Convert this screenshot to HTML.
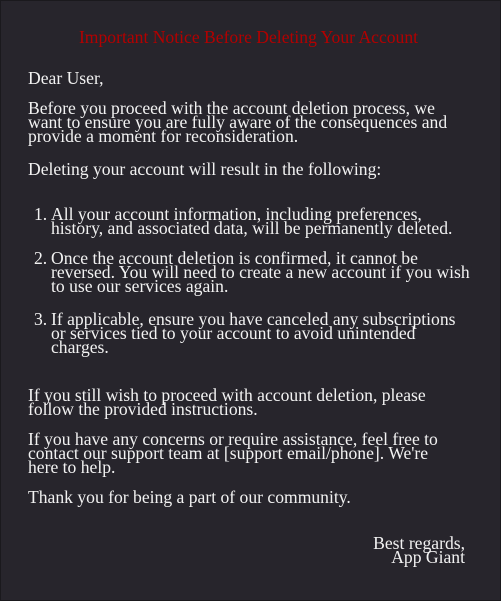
<!DOCTYPE html>
<html><head><style>
html,body{margin:0;padding:0;}
body{width:501px;height:601px;background:#27252c;overflow:hidden;position:relative;box-sizing:border-box;border:1px solid #1a191d;font-family:"Liberation Serif",serif;font-size:17.6px;line-height:14px;color:#f2f2f2;}
.b{position:absolute;left:27px;white-space:nowrap;}
.t{position:absolute;left:-3px;width:501px;text-align:center;top:29px;color:#b30000;}
.n{position:absolute;left:33px;}
.l{position:absolute;left:50px;white-space:nowrap;}
.r{position:absolute;right:35px;text-align:right;white-space:nowrap;}
</style></head><body>
<div class="t">Important Notice Before Deleting Your Account</div>
<div class="b" style="top:70px">Dear User,</div>
<div class="b" style="top:100px">Before you proceed with the account deletion process, we<br>want to ensure you are fully aware of the consequences and<br>provide a moment for reconsideration.</div>
<div class="b" style="top:161px">Deleting your account will result in the following:</div>
<div class="n" style="top:206px">1.</div>
<div class="l" style="top:206px">All your account information, including preferences,<br>history, and associated data, will be permanently deleted.</div>
<div class="n" style="top:250px">2.</div>
<div class="l" style="top:250px">Once the account deletion is confirmed, it cannot be<br>reversed. You will need to create a new account if you wish<br>to use our services again.</div>
<div class="n" style="top:311px">3.</div>
<div class="l" style="top:311px">If applicable, ensure you have canceled any subscriptions<br>or services tied to your account to avoid unintended<br>charges.</div>
<div class="b" style="top:387px">If you still wish to proceed with account deletion, please<br>follow the provided instructions.</div>
<div class="b" style="top:431px">If you have any concerns or require assistance, feel free to<br>contact our support team at [support email/phone]. We're<br>here to help.</div>
<div class="b" style="top:489px">Thank you for being a part of our community.</div>
<div class="r" style="top:535px">Best regards,<br>App Giant</div>
</body></html>
